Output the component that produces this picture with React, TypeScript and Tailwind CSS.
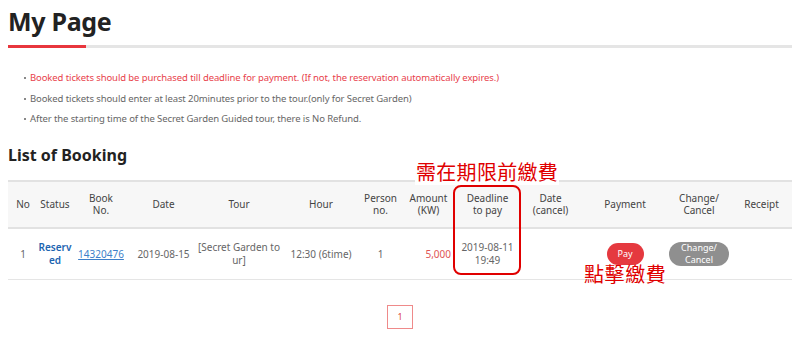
import React from 'react';

const headers: { label: React.ReactNode; w: string }[] = [
  { label: 'No', w: 'w-[30px]' },
  { label: 'Status', w: 'w-[34px]' },
  { label: <>Book<br />No.</>, w: 'w-[58px]' },
  { label: 'Date', w: 'w-[67px]' },
  { label: 'Tour', w: 'w-[84px]' },
  { label: 'Hour', w: 'w-[80px]' },
  { label: <>Person<br />no.</>, w: 'w-[39px]' },
  { label: <>Amount<br />(KW)</>, w: 'w-[57px]' },
  { label: <>Deadline<br />to pay</>, w: 'w-[61px]' },
  { label: <>Date<br />(cancel)</>, w: 'w-[65px]' },
  { label: 'Payment', w: 'w-[84px]' },
  { label: <>Change/<br />Cancel</>, w: 'w-[64px]' },
  { label: 'Receipt', w: 'w-[61px]' },
];

const notices = [
  { text: 'Booked tickets should be purchased till deadline for payment. (If not, the reservation automatically expires.)', red: true },
  { text: 'Booked tickets should enter at least 20minutes prior to the tour.(only for Secret Garden)', red: false },
  { text: 'After the starting time of the Secret Garden Guided tour, there is No Refund.', red: false },
];

export default function App() {
  return (
    <div className="w-[800px] h-[345px] bg-white px-2 font-['Noto_Sans','Noto_Sans_CJK_TC',sans-serif] text-[#555] overflow-hidden">
      <h1 className="pt-[4px] text-[25px] leading-[34px] font-bold text-[#222] tracking-[-0.3px]">My Page</h1>
      <div className="mt-[7px] flex h-[3px] w-[784px] bg-[#e5e5e5]">
        <div className="w-[78px] bg-[#e8363d]" />
      </div>

      <ul className="mt-[24px] ml-[16px] flex flex-col gap-[8px] text-[9.5px] leading-[12.5px] tracking-[-0.1px]">
        {notices.map((n) => (
          <li key={n.text} className={`flex items-center gap-[4px] ${n.red ? 'text-[#e8414b]' : 'text-[#666]'}`}>
            <span className="h-[2px] w-[2px] bg-[#888]" />
            <span>{n.text}</span>
          </li>
        ))}
      </ul>

      <h2 className="mt-[19px] text-[16px] leading-[20px] font-bold text-[#222]">List of Booking</h2>

      <div className="relative mt-[15px] w-[784px]">
        <table className="w-[784px] table-fixed border-collapse text-center text-[10px] leading-[12.5px]">
          <thead>
            <tr className="h-[47px] border-t-2 border-b-2 border-[#e2e2e2] bg-[#f7f7f7] text-[#444]">
              {headers.map((h, i) => (
                <th key={i} className={`${h.w} font-normal align-middle`}>{h.label}</th>
              ))}
            </tr>
          </thead>
          <tbody>
            <tr className="h-[52px] border-b border-[#e5e5e5] text-[#666]">
              <td>1</td>
              <td className="font-semibold text-[#1c64b0] break-all">Reserved</td>
              <td><span className="text-[#3d7fc9] underline">14320476</span></td>
              <td>2019-08-15</td>
              <td className="break-all">[Secret Garden tour]</td>
              <td>12:30 (6time)</td>
              <td>1</td>
              <td className="text-right pr-[6px] text-[#e05555]">5,000</td>
              <td>2019-08-11<br />19:49</td>
              <td />
              <td>
                <span className="inline-flex h-[22px] w-[37px] items-center justify-center rounded-full bg-[#e5393f] text-[9px] text-white">Pay</span>
              </td>
              <td>
                <span className="inline-flex h-[24px] w-[60px] flex-col items-center justify-center rounded-full bg-[#8f8f8f] text-[9px] leading-[12px] text-white">Change/<br />Cancel</span>
              </td>
              <td />
            </tr>
          </tbody>
        </table>

        <div className="absolute left-[445px] top-[5px] h-[90px] w-[68px] rounded-[8px] border-[2.5px] border-[#e00000]" />
        <div className="absolute left-[407px] top-[-19px] bg-white px-[1px] text-[20px] leading-[24px] text-[#e00000] tracking-[0.3px]">需在期限前繳費</div>
        <div className="absolute left-[576px] top-[83px] text-[20px] leading-[24px] text-[#e00000] tracking-[0.6px]">點擊繳費</div>
      </div>

      <div className="mt-[25px] flex justify-center">
        <span className="flex h-[24px] w-[26px] items-center justify-center border border-[#ef8a8a] text-[9px] text-[#d44]">1</span>
      </div>
    </div>
  );
}
